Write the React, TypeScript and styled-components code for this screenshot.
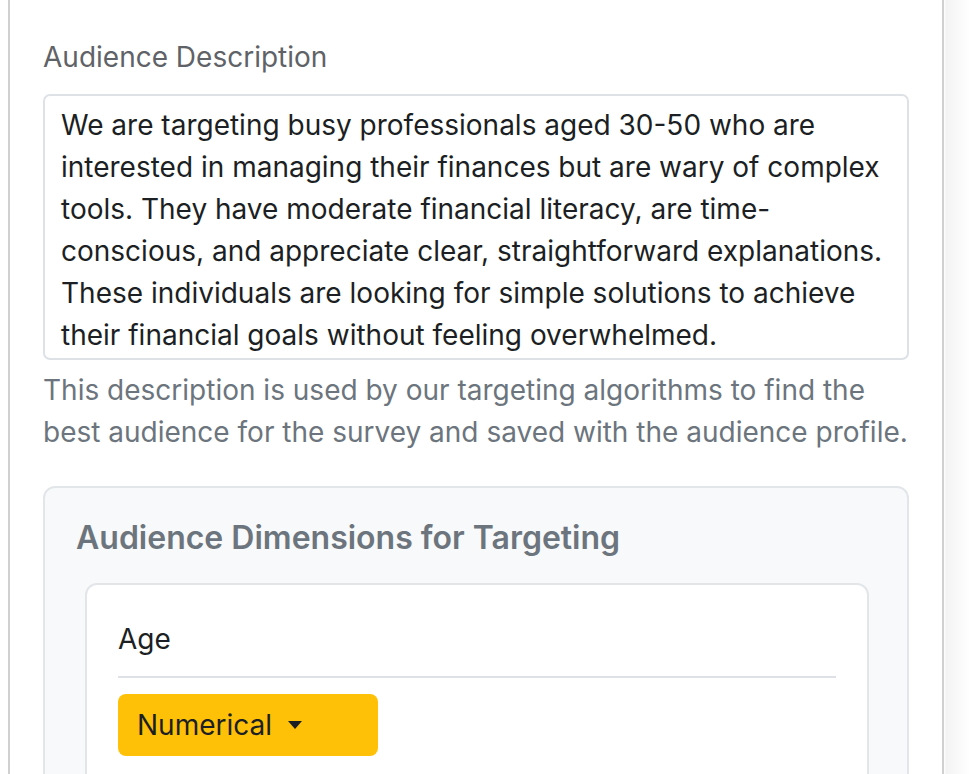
import React from "react";
import styled, { createGlobalStyle } from "styled-components";

const Global = createGlobalStyle`
  html, body { margin: 0; padding: 0; background: #ffffff; }
  body { font-family: Inter, "Noto Sans", sans-serif; color: #212529; }
  * { box-sizing: border-box; }
`;

const Page = styled.div`
  display: flex;
  height: 774px;
  overflow: hidden;
  background: linear-gradient(to right, #ffffff 0, #ffffff 944px, #f3f3f3 946px, #fafafa 960px, #ffffff 970px);
`;

const Panel = styled.div`
  margin: -20px 0 0 8px;
  width: 936px;
  flex-shrink: 0;
  border-left: 2px solid #d0d0d0;
  border-right: 2px solid #d0d0d0;
  background: #ffffff;
  padding: 56px 33px 0 33px;
  display: flex;
  flex-direction: column;
  & > * { flex-shrink: 0; }
`;

const Label = styled.label`
  font-size: 28px;
  line-height: 42px;
  color: #5f6368;
  margin-bottom: 16px;
`;

const TextArea = styled.textarea`
  display: block;
  width: 100%;
  height: 266px;
  resize: none;
  overflow: hidden;
  border: 2px solid #dee2e6;
  border-radius: 7px;
  padding: 8px 16px;
  font-family: Inter, "Noto Sans", sans-serif;
  font-size: 28px;
  line-height: 42px;
  color: #1c1f23;
  background: #ffffff;
  outline: none;
`;

const Help = styled.p`
  margin: 9px 0 0 0;
  font-size: 28px;
  line-height: 42px;
  color: #6c757d;
`;

const DimCard = styled.section`
  margin-top: 33px;
  background: #f8f9fa;
  border: 2px solid #e3e6e9;
  border-radius: 12px;
  padding: 27px 38px 0 31px;
  height: 400px;
`;

const DimTitle = styled.h5`
  margin: 0 0 22px 0;
  font-size: 32px;
  line-height: 46px;
  font-weight: 600;
  color: #6c757d;
`;

const DimItem = styled.div`
  margin-left: 9px;
  background: #ffffff;
  border: 2px solid #e3e6e9;
  border-radius: 12px;
  padding: 33px 31px 40px 31px;
  height: 400px;
`;

const DimName = styled.div`
  font-size: 28px;
  line-height: 42px;
  color: #1c1f23;
  padding-bottom: 16px;
  border-bottom: 2px solid #dee2e6;
`;

const TypeButton = styled.button`
  margin-top: 16px;
  width: 260px;
  height: 62px;
  border: none;
  border-radius: 8px;
  background: #ffc107;
  color: #1c1f23;
  font-family: Inter, "Noto Sans", sans-serif;
  font-size: 28px;
  text-align: left;
  padding: 0 19px;
  display: flex;
  align-items: center;
  gap: 16px;
`;

const Caret = styled.span`
  width: 0;
  height: 0;
  border-left: 7px solid transparent;
  border-right: 7px solid transparent;
  border-top: 8px solid #1c1f23;
`;

const description =
  "We are targeting busy professionals aged 30-50 who are interested in managing their finances but are wary of complex tools. They have moderate financial literacy, are time-conscious, and appreciate clear, straightforward explanations. These individuals are looking for simple solutions to achieve their financial goals without feeling overwhelmed.";

export default function App() {
  return (
    <>
      <Global />
      <Page>
        <Panel>
          <Label htmlFor="aud">Audience Description</Label>
          <TextArea id="aud" readOnly value={description} />
          <Help>
            This description is used by our targeting algorithms to find the best audience for the survey and saved with the audience profile.
          </Help>
          <DimCard>
            <DimTitle>Audience Dimensions for Targeting</DimTitle>
            <DimItem>
              <DimName>Age</DimName>
              <TypeButton type="button">
                Numerical
                <Caret />
              </TypeButton>
            </DimItem>
          </DimCard>
        </Panel>
      </Page>
    </>
  );
}
